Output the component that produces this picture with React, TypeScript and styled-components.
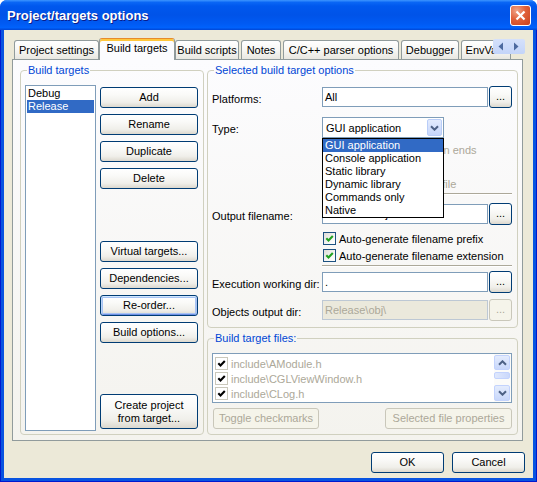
import React from 'react';
import styled, { createGlobalStyle, css } from 'styled-components';

const GlobalStyle = createGlobalStyle`
  html, body {
    margin: 0;
    padding: 0;
    background: #ffffff;
  }
  body {
    font-family: 'Liberation Sans', Arial, sans-serif;
    font-size: 11px;
    color: #000000;
  }
  * {
    box-sizing: border-box;
  }
`;

const tabs: { label: string; width: number; active?: boolean }[] = [
  { label: 'Project settings', width: 85 },
  { label: 'Build targets', width: 76, active: true },
  { label: 'Build scripts', width: 64 },
  { label: 'Notes', width: 40 },
  { label: 'C/C++ parser options', width: 116 },
  { label: 'Debugger', width: 58 },
  { label: 'EnvVars', width: 50 },
];

const targetTypes = [
  'GUI application',
  'Console application',
  'Static library',
  'Dynamic library',
  'Commands only',
  'Native',
];

const files = ['include\\AModule.h', 'include\\CGLViewWindow.h', 'include\\CLog.h'];

const Check = ({ color }: { color: string }) => (
  <svg width="9" height="9" viewBox="0 0 9 9">
    <path d="M1.3 4.3 L3.5 6.5 L7.8 2" fill="none" stroke={color} strokeWidth="2.1" />
  </svg>
);

const Chevron = ({ dir, color = '#4D6185' }: { dir: 'up' | 'down'; color?: string }) => (
  <svg width="9" height="6" viewBox="0 0 9 6">
    <path
      d={dir === 'down' ? 'M1 1.2 L4.5 4.7 L8 1.2' : 'M1 4.8 L4.5 1.3 L8 4.8'}
      fill="none"
      stroke={color}
      strokeWidth="2"
    />
  </svg>
);

const App = () => (
  <Window>
    <GlobalStyle />
    <TitleBar>
      <Title>Project/targets options</Title>
      <CloseButton>
        <svg width="11" height="11" viewBox="0 0 11 11">
          <path d="M1.5 1.5 L9.5 9.5 M9.5 1.5 L1.5 9.5" stroke="#ffffff" strokeWidth="2.2" />
        </svg>
      </CloseButton>
    </TitleBar>
    <Frame>
      <Body>
        <TabStrip>
          {tabs.map((t) => (
            <Tab key={t.label} $w={t.width} $active={t.active}>
              {t.label}
            </Tab>
          ))}
          <TabScroller>
            <svg width="32" height="15" viewBox="0 0 32 15">
              <polygon points="10,3.5 10,11.5 5.5,7.5" fill="#4D6A9F" />
              <polygon points="21,3.5 21,11.5 25.5,7.5" fill="#4D6A9F" />
            </svg>
          </TabScroller>
        </TabStrip>

        <Panel>
          <GroupBox>
            <Legend>Build targets</Legend>
            <TargetsBody>
              <ListBox>
                <ListItem>Debug</ListItem>
                <ListItem $selected>Release</ListItem>
              </ListBox>
              <ButtonColumn>
                <ButtonGroup>
                  <Button>Add</Button>
                  <Button>Rename</Button>
                  <Button>Duplicate</Button>
                  <Button>Delete</Button>
                </ButtonGroup>
                <ButtonGroup>
                  <Button>Virtual targets...</Button>
                  <Button>Dependencies...</Button>
                  <Button $focused>Re-order...</Button>
                  <Button>Build options...</Button>
                </ButtonGroup>
                <Button $h={35}>
                  Create project
                  <br />
                  from target...
                </Button>
              </ButtonColumn>
            </TargetsBody>
          </GroupBox>

          <RightColumn>
            <GroupBox>
              <Legend>Selected build target options</Legend>
              <OptionsBody>
                <FormRow $mt={9} $h={22}>
                  <FieldLabel>Platforms:</FieldLabel>
                  <TextBox>All</TextBox>
                  <DotsButton>...</DotsButton>
                </FormRow>
                <FormRow $mt={9} $h={21}>
                  <FieldLabel>Type:</FieldLabel>
                  <Combo>
                    <ComboText>GUI application</ComboText>
                    <ComboArrow>
                      <Chevron dir="down" />
                    </ComboArrow>
                    <DropList>
                      {targetTypes.map((t, i) => (
                        <DropItem key={t} $selected={i === 0}>
                          {t}
                        </DropItem>
                      ))}
                    </DropList>
                  </Combo>
                </FormRow>
                <FormRow $mt={3} $h={17}>
                  <CheckLine $disabled>
                    <CheckBox $disabled />
                    Pause when execution ends
                  </CheckLine>
                </FormRow>
                <FormRow $h={17}>
                  <CheckLine $disabled>
                    <CheckBox $disabled />
                    Create import library
                  </CheckLine>
                </FormRow>
                <FormRow $h={17}>
                  <CheckLine $disabled>
                    <CheckBox $disabled />
                    Create .DEF exports file
                  </CheckLine>
                </FormRow>
                <Separator />
                <FormRow $mt={8} $h={22}>
                  <FieldLabel>Output filename:</FieldLabel>
                  <TextBox>Release\Project.exe</TextBox>
                  <DotsButton>...</DotsButton>
                </FormRow>
                <FormRow $mt={5} $h={17}>
                  <CheckLine>
                    <CheckBox>
                      <Check color="#21A121" />
                    </CheckBox>
                    Auto-generate filename prefix
                  </CheckLine>
                </FormRow>
                <FormRow $h={17}>
                  <CheckLine>
                    <CheckBox>
                      <Check color="#21A121" />
                    </CheckBox>
                    Auto-generate filename extension
                  </CheckLine>
                </FormRow>
                <Separator />
                <FormRow $mt={4} $h={22}>
                  <FieldLabel>Execution working dir:</FieldLabel>
                  <TextBox>.</TextBox>
                  <DotsButton>...</DotsButton>
                </FormRow>
                <FormRow $mt={6} $h={22}>
                  <FieldLabel>Objects output dir:</FieldLabel>
                  <TextBox $disabled>Release\obj\</TextBox>
                  <DotsButton $disabled>...</DotsButton>
                </FormRow>
              </OptionsBody>
            </GroupBox>

            <GroupBox>
              <Legend>Build target files:</Legend>
              <FilesBody>
                <FileList>
                  <FileItems>
                    {files.map((f) => (
                      <FileItem key={f}>
                        <CheckBox $flat>
                          <Check color="#000000" />
                        </CheckBox>
                        {f}
                      </FileItem>
                    ))}
                  </FileItems>
                  <ScrollBar>
                    <ScrollButton>
                      <Chevron dir="up" />
                    </ScrollButton>
                    <ScrollThumb />
                    <ScrollButton $bottom>
                      <Chevron dir="down" />
                    </ScrollButton>
                  </ScrollBar>
                </FileList>
                <FileButtons>
                  <Button $w={106} $disabled>
                    Toggle checkmarks
                  </Button>
                  <Button $w={127} $disabled>
                    Selected file properties
                  </Button>
                </FileButtons>
              </FilesBody>
            </GroupBox>
          </RightColumn>
        </Panel>

        <Footer>
          <Button $w={73}>OK</Button>
          <Button $w={73}>Cancel</Button>
        </Footer>
      </Body>
    </Frame>
  </Window>
);

const Window = styled.div`
  width: 537px;
  height: 482px;
  display: flex;
  flex-direction: column;
  border-radius: 7px 7px 0 0;
  overflow: hidden;
  background: #0055ea;
`;

const TitleBar = styled.div`
  height: 30px;
  flex: 0 0 30px;
  display: flex;
  align-items: center;
  justify-content: space-between;
  padding: 0 6px 0 7px;
  background: linear-gradient(
    180deg,
    #3d95ff 0%,
    #0a66f5 8%,
    #0058ee 20%,
    #0053e8 50%,
    #005bf4 80%,
    #0062fc 92%,
    #0046d6 100%
  );
`;

const Title = styled.div`
  font-family: 'Liberation Sans', Arial, sans-serif;
  font-weight: bold;
  font-size: 13px;
  color: #ffffff;
  text-shadow: 1px 1px 0 #0a1c8a;
  padding-top: 1px;
`;

const CloseButton = styled.div`
  width: 21px;
  height: 21px;
  border: 1px solid #ffffff;
  border-radius: 3px;
  display: flex;
  align-items: center;
  justify-content: center;
  background: radial-gradient(circle at 30% 25%, #f0a58a 0%, #e0613a 45%, #c8401c 100%);
`;

const Frame = styled.div`
  flex: 1;
  display: flex;
  padding: 0 4px 4px;
  background: #0853e0;
  box-shadow: inset 1px 0 0 #0019cf, inset -1px 0 0 #0019cf, inset 0 -1px 0 #0019cf;
`;

const Body = styled.div`
  flex: 1;
  display: flex;
  flex-direction: column;
  background: #ece9d8;
  padding: 8px 10px 5px 8px;
`;

const TabStrip = styled.div`
  position: relative;
  z-index: 1;
  height: 21px;
  display: flex;
  align-items: flex-end;
  gap: 2px;
  padding-left: 2px;
`;

const Tab = styled.div<{ $w: number; $active?: boolean }>`
  flex: 0 0 auto;
  width: ${(p) => p.$w}px;
  height: 19px;
  display: flex;
  align-items: center;
  justify-content: center;
  padding-bottom: 1px;
  white-space: nowrap;
  overflow: hidden;
  border: 1px solid #919b9c;
  border-bottom: none;
  border-radius: 3px 3px 0 0;
  background: linear-gradient(180deg, #ffffff 0%, #f7f7f4 50%, #e8e7e1 100%);

  ${(p) =>
    p.$active &&
    css`
      position: relative;
      z-index: 2;
      height: 22px;
      margin: 0 -2px -1px;
      padding-bottom: 3px;
      border-top-color: #e68b2c;
      background: #fcfcfe;
      box-shadow: inset 0 2px 0 #ffc73c;
    `}
`;

const TabScroller = styled.div`
  position: absolute;
  right: -2px;
  top: 1px;
  width: 32px;
  height: 15px;
  display: flex;
  background: linear-gradient(180deg, #d5e1fb 0%, #c3d4f9 100%);
  border-radius: 2px;
`;

const Panel = styled.div`
  height: 382px;
  flex: 0 0 382px;
  border: 1px solid #919b9c;
  background: linear-gradient(180deg, #fcfcfe 0%, #f4f3ee 100%);
  display: grid;
  grid-template-columns: 184px 311px;
  column-gap: 3px;
  padding: 4px 4px 5px 7px;
`;

const GroupBox = styled.fieldset`
  margin: 0;
  padding: 0;
  min-width: 0;
  border: 1px solid #d0d0bf;
  border-radius: 4px;
  display: flex;
  flex-direction: column;
`;

const Legend = styled.legend`
  margin-left: 6px;
  padding: 0 1px;
  line-height: 13px;
  font-size: 11px;
  color: #0046d5;
`;

const TargetsBody = styled.div`
  flex: 1;
  display: flex;
  gap: 4px;
  padding: 8px 5px 3px 4px;
`;

const ListBox = styled.div`
  width: 71px;
  border: 1px solid #7f9db9;
  background: #ffffff;
  padding: 1px;
`;

const ListItem = styled.div<{ $selected?: boolean }>`
  height: 13px;
  line-height: 13px;
  padding-left: 1px;
  white-space: nowrap;
  ${(p) =>
    p.$selected &&
    css`
      background: #316ac5;
      color: #ffffff;
    `}
`;

const ButtonColumn = styled.div`
  width: 98px;
  display: flex;
  flex-direction: column;
  justify-content: space-between;
  padding: 2px 0 2px;
`;

const ButtonGroup = styled.div`
  display: flex;
  flex-direction: column;
  gap: 6px;
`;

const Button = styled.div<{ $w?: number; $h?: number; $focused?: boolean; $disabled?: boolean }>`
  width: ${(p) => (p.$w ? `${p.$w}px` : '100%')};
  height: ${(p) => p.$h ?? 21}px;
  flex: 0 0 auto;
  display: flex;
  align-items: center;
  justify-content: center;
  text-align: center;
  line-height: 13px;
  white-space: nowrap;
  border: 1px solid #003c74;
  border-radius: 3px;
  background: linear-gradient(180deg, #ffffff 0%, #fafaf8 35%, #f0efea 75%, #dcd8ce 100%);
  color: #000000;

  ${(p) =>
    p.$focused &&
    css`
      box-shadow: inset 0 1px 0 #cee7ff, inset 1px 0 0 #bcd4f6, inset -1px 0 0 #a9c3f2,
        inset 0 -1px 0 #6f8fe4, inset 0 0 0 2px #a7c3f3;
    `}

  ${(p) =>
    p.$disabled &&
    css`
      border-color: #c9c7ba;
      background: #f5f4ea;
      color: #aca899;
    `}
`;

const RightColumn = styled.div`
  display: flex;
  flex-direction: column;
  gap: 4px;
`;

const OptionsBody = styled.div`
  display: flex;
  flex-direction: column;
  padding: 0 4px 6px;
`;

const FormRow = styled.div<{ $mt?: number; $h: number }>`
  display: grid;
  grid-template-columns: 110px 166px 24px;
  align-items: center;
  height: ${(p) => p.$h}px;
  margin-top: ${(p) => p.$mt ?? 0}px;
`;

const FieldLabel = styled.div`
  padding-top: 3px;
  white-space: nowrap;
`;

const TextBox = styled.div<{ $disabled?: boolean }>`
  height: 20px;
  border: 1px solid #7f9db9;
  background: #ffffff;
  padding: 0 2px;
  line-height: 18px;
  white-space: nowrap;
  overflow: hidden;

  ${(p) =>
    p.$disabled &&
    css`
      border-color: #bdc8d4;
      background: #ebe9dc;
      color: #aca899;
    `}
`;

const DotsButton = styled(Button)`
  width: 23px;
  height: 22px;
  margin-left: 1px;
  padding-bottom: 2px;
`;

const Combo = styled.div`
  position: relative;
  width: 122px;
  height: 21px;
  border: 1px solid #7f9db9;
  background: #ffffff;
  display: flex;
  align-items: center;
`;

const ComboText = styled.div`
  flex: 1;
  padding-left: 3px;
  white-space: nowrap;
`;

const ComboArrow = styled.div`
  width: 15px;
  height: 17px;
  margin-right: 1px;
  display: flex;
  align-items: center;
  justify-content: center;
  border: 1px solid #b9cdf8;
  border-radius: 2px;
  background: linear-gradient(180deg, #e3ebfd 0%, #c6d6fb 100%);
`;

const DropList = styled.div`
  position: absolute;
  z-index: 10;
  left: -1px;
  top: calc(100% + 1px);
  width: 122px;
  border: 1px solid #000000;
  background: #ffffff;
`;

const DropItem = styled.div<{ $selected?: boolean }>`
  height: 13px;
  line-height: 13px;
  padding-left: 2px;
  white-space: nowrap;
  ${(p) =>
    p.$selected &&
    css`
      background: #316ac5;
      color: #ffffff;
    `}
`;

const CheckLine = styled.div<{ $disabled?: boolean }>`
  grid-column: 2 / span 2;
  display: flex;
  align-items: center;
  gap: 3px;
  padding-left: 1px;
  white-space: nowrap;
  color: ${(p) => (p.$disabled ? '#aca899' : '#000000')};
`;

const CheckBox = styled.span<{ $disabled?: boolean; $flat?: boolean }>`
  flex: 0 0 13px;
  width: 13px;
  height: 13px;
  display: inline-flex;
  align-items: center;
  justify-content: center;
  border: 1px solid #1c5180;
  background: linear-gradient(135deg, #dcdcd7 0%, #f6f6f4 60%, #ffffff 100%);

  ${(p) =>
    (p.$disabled || p.$flat) &&
    css`
      border-color: #cac8bb;
      background: #ffffff;
    `}
`;

const Separator = styled.div`
  margin: 1px 0 0 110px;
  height: 2px;
  width: 190px;
  border-top: 1px solid #aca899;
  border-bottom: 1px solid #ffffff;
`;

const FilesBody = styled.div`
  display: flex;
  flex-direction: column;
  gap: 5px;
  padding: 8px 5px 5px 4px;
`;

const FileList = styled.div`
  height: 50px;
  border: 1px solid #7f9db9;
  background: #ffffff;
  display: flex;
`;

const FileItems = styled.div`
  flex: 1;
  padding: 2px 0 0 2px;
`;

const FileItem = styled.div`
  height: 15px;
  display: flex;
  align-items: center;
  gap: 3px;
  color: #aca899;
  white-space: nowrap;
`;

const ScrollBar = styled.div`
  width: 17px;
  display: flex;
  flex-direction: column;
  padding: 1px 1px 1px 0;
  background: #fbfbf9;
`;

const ScrollButton = styled.div<{ $bottom?: boolean }>`
  height: ${(p) => (p.$bottom ? 16 : 15)}px;
  margin-top: ${(p) => (p.$bottom ? 'auto' : '0')};
  display: flex;
  align-items: center;
  justify-content: center;
  border: 1px solid #c3d3fd;
  border-radius: 2px;
  background: linear-gradient(180deg, #e4ecfd 0%, #c8d7fb 100%);
`;

const ScrollThumb = styled.div`
  height: 7px;
  margin-top: 2px;
  border: 1px solid #c3d3fd;
  border-radius: 2px;
  background: linear-gradient(90deg, #dfe8fd 0%, #cad8fb 100%);
`;

const FileButtons = styled.div`
  display: flex;
  justify-content: space-between;
  padding-left: 1px;
`;

const Footer = styled.div`
  display: flex;
  justify-content: flex-end;
  gap: 8px;
  margin-top: 11px;
  margin-right: -2px;
`;

export default App;
